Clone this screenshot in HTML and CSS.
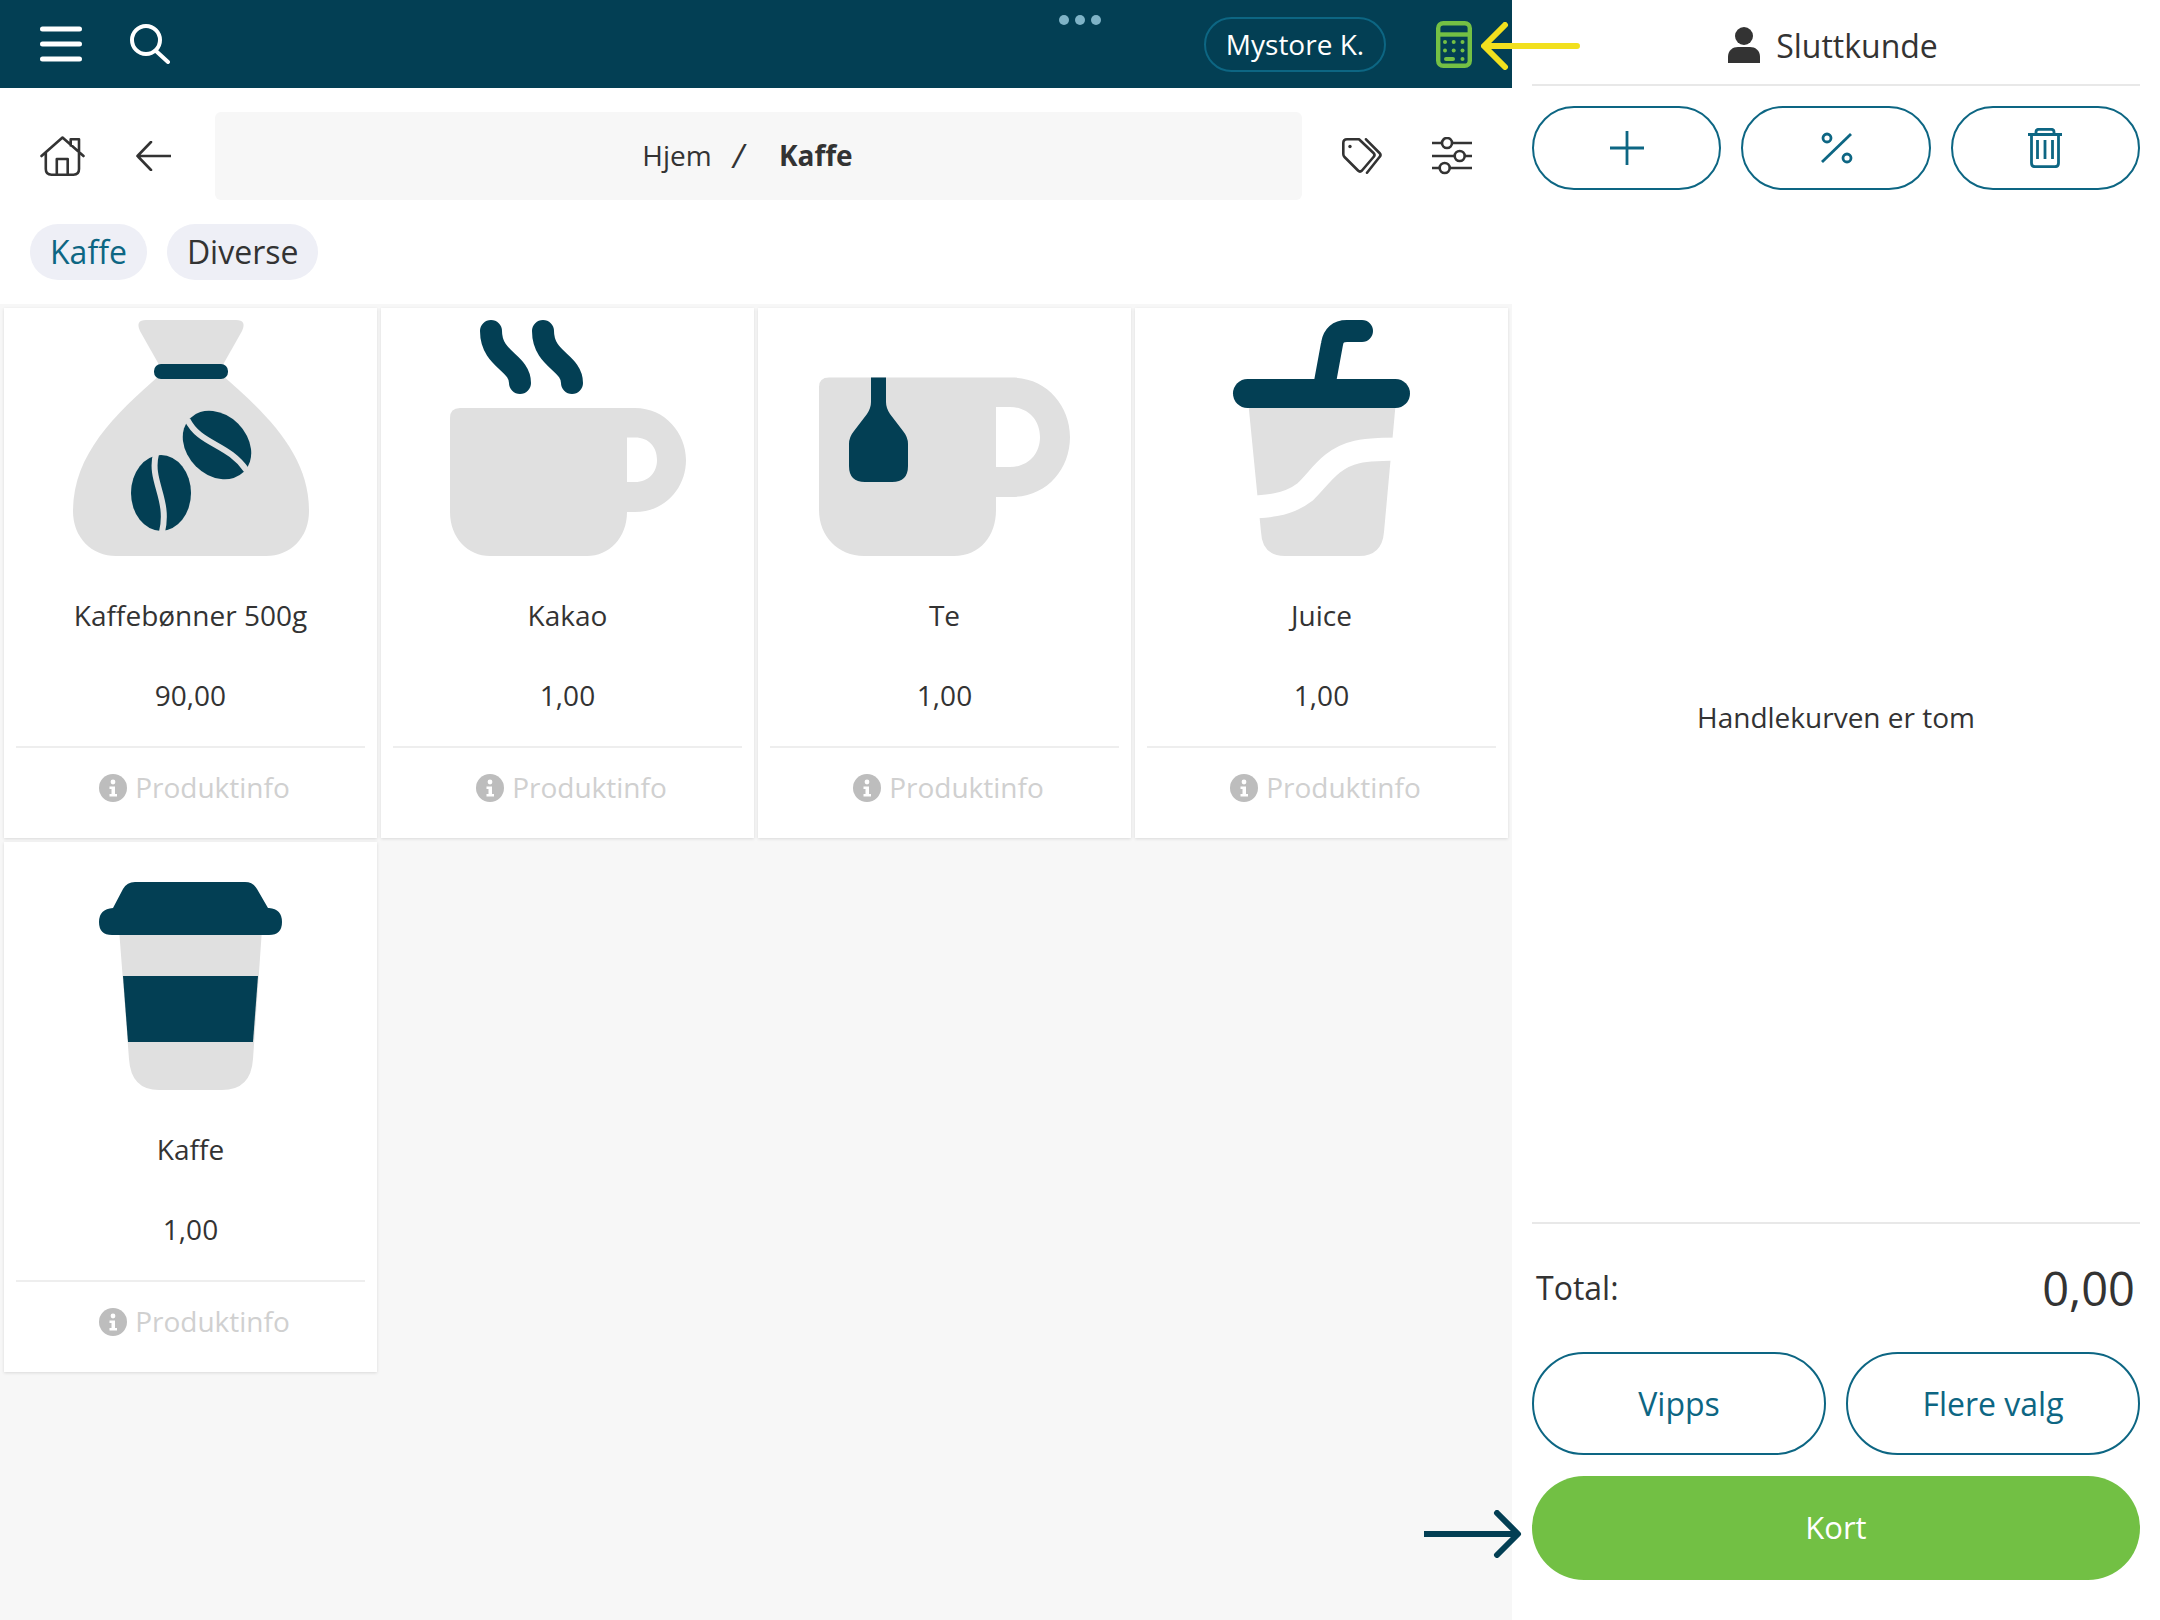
FILE: index.html
```html
<!DOCTYPE html>
<html lang="nb">
<head>
  <meta charset="UTF-8" />
  <title>Kasse</title>
  <link rel="stylesheet" href="styles.css">
</head>
<body>

  <div class="app">
    <div class="left">
      <div class="topbar">
        <svg class="burger" viewBox="0 0 42 36"><path d="M2.5 3H39.5M2.5 18H39.5M2.5 33H39.5"/></svg>
        <svg class="search" viewBox="0 0 40 40"><circle cx="16" cy="16" r="14"/><path d="M26 27L38 38"/></svg>
        <div class="dots"><span></span><span></span><span></span></div>
        <div class="store">Mystore K.</div>
        <svg class="calc" viewBox="0 0 36 47">
          <rect x="2.2" y="2.2" width="31.6" height="42.6" rx="5"/>
          <path d="M2 13.5H34"/>
          <g class="calc-keys">
            <circle cx="9" cy="21" r="2"/><circle cx="17.7" cy="21" r="2"/><circle cx="26.5" cy="21" r="2"/>
            <circle cx="9" cy="29.5" r="2"/><circle cx="17.7" cy="29.5" r="2"/><circle cx="26.5" cy="29.5" r="2"/>
            <rect x="8" y="36" width="11" height="4" rx="2"/><circle cx="26.5" cy="38" r="2"/>
          </g>
        </svg>
      </div>

      <div class="subnav">
        <svg class="home" viewBox="0 0 45 40">
          <path d="M1.5 20L22.5 1.5L43.5 20M5.8 17V33Q5.8 38.7 11.5 38.7H33.5Q39 38.7 39 33V17M16.8 38.7V23H27.7V38.7M30.7 9.5V3.2H39V17"/>
        </svg>
        <svg class="back" viewBox="0 0 35 30"><path d="M34.5 15H1.5M15 1L1.5 15L15 29"/></svg>
        <div class="crumbs">
          <span>Hjem</span>
          <span class="crumb-sep">/</span>
          <b>Kaffe</b>
        </div>
        <svg class="tag" viewBox="0 0 40 36">
          <path d="M5 1.3H17L31.5 15Q33.5 17 31.5 19L20 32.5Q18 34.5 16 32.5L2.5 19Q1.3 17.8 1.3 16V5Q1.3 1.3 5 1.3Z"/>
          <path d="M24 1.3L37.5 15Q39.5 17 37.5 19L25 34.7"/>
          <circle class="tag-hole" cx="8" cy="8.5" r="1.7"/>
        </svg>
        <svg class="sliders" viewBox="0 0 40 38">
          <path d="M0 6H40M0 19H40M0 31H40"/>
          <circle cx="15" cy="6" r="5"/><circle cx="27.7" cy="19" r="5"/><circle cx="12.7" cy="31" r="5"/>
        </svg>
      </div>

      <div class="chips">
        <div class="chip chip-active">Kaffe</div>
        <div class="chip">Diverse</div>
      </div>

      <div class="grid">
        <div class="card">
          <svg class="pic" viewBox="0 0 373 240">
            <path class="light" d="M142 0H232Q243 0 238 11L216 50H158L136 11Q131 0 142 0Z"/>
            <path class="light" d="M156 55C110 95 69 135 69 191C69 218 88 236 112 236H262C286 236 305 218 305 191C305 135 264 95 218 55Z"/>
            <rect class="dark" x="150" y="44" width="74" height="15" rx="7"/>
            <g transform="translate(157,173)">
              <ellipse class="dark" rx="30" ry="38"/>
              <path class="bean-line" d="M-5 -39C-12 -12 9 6 1 39"/>
            </g>
            <g transform="translate(213,125) rotate(-45)">
              <ellipse class="dark" rx="30" ry="38"/>
              <path class="bean-line" d="M-3 -39C-12 -12 9 6 3 39"/>
            </g>
          </svg>
          <div class="name">Kaffebønner 500g</div>
          <div class="price">90,00</div>
          <div class="info"><svg class="info-icon" viewBox="0 0 28 28"><use href="#info"/></svg>Produktinfo</div>
        </div>

        <div class="card">
          <svg class="pic" viewBox="0 0 373 240">
            <path class="light" fill-rule="evenodd" d="M79 88H254C284 88 305 113 305 140C305 168 284 192 254 192H246C246 218 228 236 206 236H109C87 236 69 218 69 192V98Q69 88 79 88ZM246 117.500V162H254C268 162 276 152 276 140C276 127 268 117.500 254 117.500Z"/>
            <path class="steam" d="M110 11C110 40 139 42 139 63M162 11C162 40 191 42 191 63"/>
          </svg>
          <div class="name">Kakao</div>
          <div class="price">1,00</div>
          <div class="info"><svg class="info-icon" viewBox="0 0 28 28"><use href="#info"/></svg>Produktinfo</div>
        </div>

        <div class="card">
          <svg class="pic" viewBox="0 0 373 240">
            <path class="light" fill-rule="evenodd" d="M71 57.500H254C288 57.500 312 85 312 117C312 150 288 177 254 177H238V190C238 216 222 236 196 236H106C80 236 61 216 61 190V67Q61 57.500 71 57.500ZM238 87V147H252C270 147 282 134 282 117C282 100 270 87 252 87Z"/>
            <path class="dark" d="M113 57.500H128V82Q128 88 132 94L145 111Q150 117 150 124V146Q150 162 134 162H107Q91 162 91 146V124Q91 117 96 111L109 94Q113 88 113 82Z"/>
          </svg>
          <div class="name">Te</div>
          <div class="price">1,00</div>
          <div class="info"><svg class="info-icon" viewBox="0 0 28 28"><use href="#info"/></svg>Produktinfo</div>
        </div>

        <div class="card">
          <svg class="pic" viewBox="0 0 373 240">
            <path class="light" d="M113 80H261L249 212Q247 236 224 236H150Q127 236 126 212Z"/>
            <path class="swoosh" d="M105 187.500C130 187 152 186 170 172C185 158 195 138 222 132C235 129 250 129 270 129"/>
            <path class="straw" d="M190 62L197 24Q199 11 212 11H227"/>
            <rect class="dark" x="98" y="59" width="177" height="29" rx="14.500"/>
          </svg>
          <div class="name">Juice</div>
          <div class="price">1,00</div>
          <div class="info"><svg class="info-icon" viewBox="0 0 28 28"><use href="#info"/></svg>Produktinfo</div>
        </div>

        <div class="card">
          <svg class="pic" viewBox="0 0 373 240">
            <path class="light" d="M115 75H258L249 205Q247 236 218 236H155Q127 236 125 205Z"/>
            <path class="dark" d="M119 122H254L249 188H124Z"/>
            <path class="dark" d="M109 54L119 35Q123 28 131 28H241Q249 28 253 35L264 54H265Q278 55 278 68Q278 81 265 81H108Q95 81 95 68Q95 55 109 54Z"/>
          </svg>
          <div class="name">Kaffe</div>
          <div class="price">1,00</div>
          <div class="info"><svg class="info-icon" viewBox="0 0 28 28"><use href="#info"/></svg>Produktinfo</div>
        </div>
      </div>
    </div>

    <div class="right">
      <div class="customer">
        <svg class="person" viewBox="0 0 32 36">
          <circle cx="16" cy="9" r="9"/>
          <path d="M0 36V30C0 23 5 20 10 20H22C27 20 32 23 32 30V36Z"/>
        </svg>
        Sluttkunde
      </div>

      <div class="actions">
        <button class="btn">
          <svg class="act-icon" viewBox="0 0 34 34"><path d="M0 17H34M17 0V34"/></svg>
        </button>
        <button class="btn">
          <svg class="act-icon" viewBox="0 0 34 34">
            <circle cx="8" cy="7" r="4"/><circle cx="28" cy="27" r="4"/><path d="M3 31L32 3"/>
          </svg>
        </button>
        <button class="btn">
          <svg class="trash" viewBox="0 0 34 40">
            <path d="M0 6.500H34M8 6V4Q8 1.300 11 1.300H23Q26 1.300 26 4V6M3.500 7V35Q3.500 38.700 7 38.700H27Q30.500 38.700 30.500 35V7M9.500 12V31M17 12V31M24.500 12V31"/>
          </svg>
        </button>
      </div>

      <div class="empty">Handlekurven er tom</div>

      <div class="total">
        <span>Total:</span>
        <span class="total-sum">0,00</span>
      </div>

      <div class="pay-row">
        <button class="btn btn-pay">Vipps</button>
        <button class="btn btn-pay">Flere valg</button>
      </div>
      <button class="btn-card">Kort</button>
    </div>

    <svg class="mark mark-yellow" viewBox="0 0 100 48"><path d="M96 24H4M24 3L3 24L24 45"/></svg>
    <svg class="mark mark-navy" viewBox="0 0 100 48"><path d="M0 24H92M73 3L94 24L73 45"/></svg>

    <svg class="sprite">
      <symbol id="info" viewBox="0 0 28 28">
        <circle cx="14" cy="14" r="14" fill="#bdbdbd"/>
        <circle cx="14" cy="8" r="2.400" fill="#fff"/>
        <path d="M10.500 12.500H16V20H18V22.500H10.500V20H12.500V15H10.500Z" fill="#fff"/>
      </symbol>
    </svg>
  </div>

</body>
</html>
```

FILE: styles.css
```css
body {
  margin: 0;
  font-family: "Open Sans", "Noto Sans", sans-serif;
  color: #333;
  background: #fff;
}
button {
  font-family: inherit;
  padding: 0;
}
.app {
  position: relative;
  display: flex;
  width: 2160px;
  height: 1620px;
  overflow: hidden;
}

/* left side */
.left {
  width: 1512px;
  background: #f7f7f7;
}
.topbar {
  display: flex;
  align-items: center;
  height: 88px;
  padding-left: 40px;
  background: #033f54;
}
.burger {
  width: 42px;
  height: 36px;
  fill: none;
  stroke: #fff;
  stroke-width: 5;
  stroke-linecap: round;
}
.search {
  width: 40px;
  height: 40px;
  margin-left: 48px;
  fill: none;
  stroke: #fff;
  stroke-width: 4;
  stroke-linecap: round;
}
.dots {
  display: flex;
  gap: 6px;
  align-self: flex-start;
  margin: 15px 0 0 889px;
}
.dots span {
  width: 10px;
  height: 10px;
  border-radius: 50%;
  background: #7fb3c7;
}
.store {
  box-sizing: border-box;
  width: 182px;
  height: 55px;
  margin-left: 103px;
  border: 2px solid #0d6683;
  border-radius: 28px;
  color: #fff;
  font-size: 28px;
  line-height: 50px;
  text-align: center;
}
.calc {
  width: 36px;
  height: 47px;
  margin-left: 50px;
  fill: none;
  stroke: #74c044;
  stroke-width: 4.4;
}
.calc-keys {
  fill: #74c044;
  stroke: none;
}
.subnav {
  display: flex;
  align-items: center;
  height: 112px;
  padding-top: 24px;
  padding-left: 40px;
  box-sizing: border-box;
  background: #fff;
}
.home, .back, .tag, .sliders {
  fill: none;
  stroke: #333;
  stroke-width: 2.600;
  stroke-linecap: round;
  stroke-linejoin: round;
}
.home {
  width: 45px;
  height: 40px;
}
.back {
  width: 35px;
  height: 30px;
  margin-left: 51px;
}
.crumbs {
  display: flex;
  justify-content: center;
  align-items: center;
  gap: 21px;
  width: 1087px;
  height: 88px;
  margin-left: 44px;
  padding: 0 22px 2px 0;
  box-sizing: border-box;
  border-radius: 6px;
  background: #f7f7f7;
  font-size: 28px;
}
.crumb-sep {
  font-size: 32px;
  font-style: italic;
  margin-right: 14px;
}
.tag {
  width: 40px;
  height: 36px;
  margin-left: 40px;
}
.tag-hole {
  fill: #333;
  stroke: none;
}
.sliders {
  width: 40px;
  height: 38px;
  margin-left: 50px;
}
.sliders circle {
  fill: #fff;
}
.chips {
  display: flex;
  gap: 20px;
  padding: 24px 0 24px 30px;
  background: #fff;
}
.chip {
  height: 56px;
  padding: 0 20px;
  border-radius: 28px;
  background: #eeeff6;
  font-size: 32px;
  line-height: 56px;
}
.chip-active {
  color: #0d6683;
}
.grid {
  display: grid;
  grid-template-columns: repeat(4, 373px);
  grid-auto-rows: 530px;
  gap: 4px;
  padding: 4px;
}
.card {
  padding-top: 12px;
  box-sizing: border-box;
  background: #fff;
  box-shadow: 0 1px 3px rgba(0,0,0,0.12);
  text-align: center;
  font-size: 28px;
  line-height: 40px;
}
.pic {
  display: block;
  width: 373px;
  height: 240px;
}
.light {
  fill: #e0e0e0;
}
.dark {
  fill: #033f54;
}
.bean-line {
  fill: none;
  stroke: #e0e0e0;
  stroke-width: 6;
}
.steam, .straw {
  fill: none;
  stroke: #033f54;
  stroke-width: 22;
  stroke-linecap: round;
}
.swoosh {
  fill: none;
  stroke: #fff;
  stroke-width: 23;
}
.name {
  margin-top: 35px;
}
.price {
  margin: 40px 12px 0;
  padding-bottom: 31px;
  border-bottom: 2px solid #eeeeee;
}
.info {
  display: flex;
  justify-content: center;
  align-items: center;
  gap: 8px;
  margin-top: 19px;
  padding-left: 8px;
  color: #d0d0d0;
}
.info-icon {
  width: 28px;
  height: 28px;
  margin-top: 2px;
}
.sprite {
  display: none;
}

/* right side */
.right {
  display: flex;
  flex-direction: column;
  width: 648px;
  padding: 0 20px 40px 20px;
  box-sizing: border-box;
  background: #fff;
}
.customer {
  display: flex;
  justify-content: center;
  align-items: center;
  gap: 16px;
  height: 78px;
  padding: 6px 6px 0 0;
  border-bottom: 2px solid #e8e8e8;
  font-size: 32px;
  flex-shrink: 0;
}
.person {
  width: 32px;
  height: 36px;
  fill: #333;
}
.actions {
  display: flex;
  gap: 20px;
  margin-top: 20px;
}
.btn {
  flex: 1;
  display: flex;
  justify-content: center;
  align-items: center;
  height: 84px;
  border: 2px solid #0d6683;
  border-radius: 42px;
  background: #fff;
  color: #0d6683;
}
.act-icon {
  width: 34px;
  height: 34px;
  fill: none;
  stroke: #0d6683;
  stroke-width: 2.800;
}
.trash {
  width: 34px;
  height: 40px;
  fill: none;
  stroke: #0d6683;
  stroke-width: 2.800;
}
.empty {
  flex: 1;
  display: flex;
  justify-content: center;
  align-items: center;
  padding-top: 21px;
  font-size: 28px;
}
.total {
  display: flex;
  justify-content: space-between;
  align-items: center;
  height: 130px;
  padding: 0 5px 1px 4px;
  border-top: 2px solid #e8e8e8;
  box-sizing: border-box;
  font-size: 32px;
}
.total-sum {
  font-size: 47px;
}
.pay-row {
  display: flex;
  gap: 20px;
}
.btn-pay {
  height: 103px;
  border-radius: 52px;
  font-size: 32px;
}
.btn-card {
  height: 104px;
  margin-top: 21px;
  padding-bottom: 2px;
  border: none;
  border-radius: 52px;
  background: #72c044;
  color: #fff;
  font-size: 31px;
}

/* annotation arrows */
.mark {
  position: absolute;
  width: 100px;
  height: 48px;
  fill: none;
  stroke-width: 6;
  stroke-linejoin: round;
}
.mark-yellow {
  left: 1481px;
  top: 22px;
  stroke: #f2e01e;
  stroke-linecap: round;
}
.mark-navy {
  left: 1424px;
  top: 1510px;
  stroke: #033f54;
  stroke-linecap: round;
}
```
